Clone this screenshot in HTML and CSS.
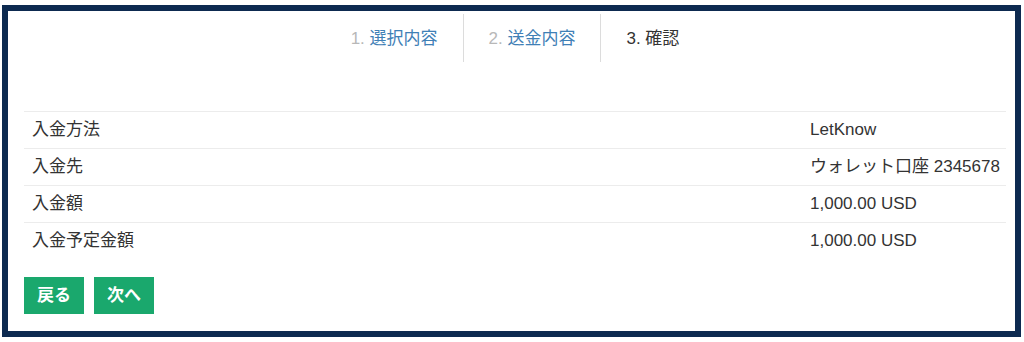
FILE: index.html
```html
<!DOCTYPE html>
<html lang="ja">
<head>
<meta charset="utf-8">
<title>確認</title>
<link rel="stylesheet" href="styles.css">
</head>
<body>
<div class="frame">
  <nav class="steps">
    <div class="step done"><span class="num">1. </span><span class="label">選択内容</span></div>
    <div class="step done"><span class="num">2. </span><span class="label">送金内容</span></div>
    <div class="step current"><span class="num">3. </span><span class="label">確認</span></div>
  </nav>
  <div class="details">
    <div class="row"><div class="cell">入金方法</div><div class="cell">LetKnow</div></div>
    <div class="row"><div class="cell">入金先</div><div class="cell">ウォレット口座 2345678</div></div>
    <div class="row"><div class="cell">入金額</div><div class="cell">1,000.00 USD</div></div>
    <div class="row"><div class="cell">入金予定金額</div><div class="cell">1,000.00 USD</div></div>
  </div>
  <div class="actions">
    <button class="btn" type="button">戻る</button>
    <button class="btn" type="button">次へ</button>
  </div>
</div>
</body>
</html>
```
FILE: styles.css
```css
html, body {
  margin: 0;
  padding: 0;
  background: #fff;
}
body {
  font-family: "Liberation Sans", "Noto Sans CJK JP", sans-serif;
  font-size: 17px;
  color: #333;
  padding: 5px 3px 0 2px;
}
.frame {
  box-sizing: border-box;
  width: 1019px;
  height: 332px;
  border: 6px solid #0d2a50;
  padding: 3px 9px 0 16px;
}
.steps {
  display: flex;
  justify-content: center;
  height: 48px;
}
.step {
  box-sizing: border-box;
  height: 48px;
  padding: 15px 25px 0;
  line-height: 20px;
  white-space: nowrap;
}
.step + .step {
  border-left: 1px solid #dcdcdc;
}
.step.done .num {
  color: #b8b8b8;
}
.step.done .label {
  color: #3f80b6;
}
.step.current {
  color: #333;
}
.details {
  margin-top: 49px;
}
.row {
  display: grid;
  grid-template-columns: 1fr 204px;
  border-top: 1px solid #ececec;
}
.cell {
  padding: 8px;
  line-height: 20px;
  white-space: nowrap;
}
.actions {
  display: flex;
  gap: 10px;
  margin-top: 18px;
}
.btn {
  font-family: inherit;
  font-size: 17px;
  font-weight: bold;
  color: #fff;
  background: #1aa86d;
  border: none;
  border-radius: 0;
  padding: 8px 0;
  line-height: 21px;
  height: 37px;
  width: 60px;
  cursor: pointer;
}
```
